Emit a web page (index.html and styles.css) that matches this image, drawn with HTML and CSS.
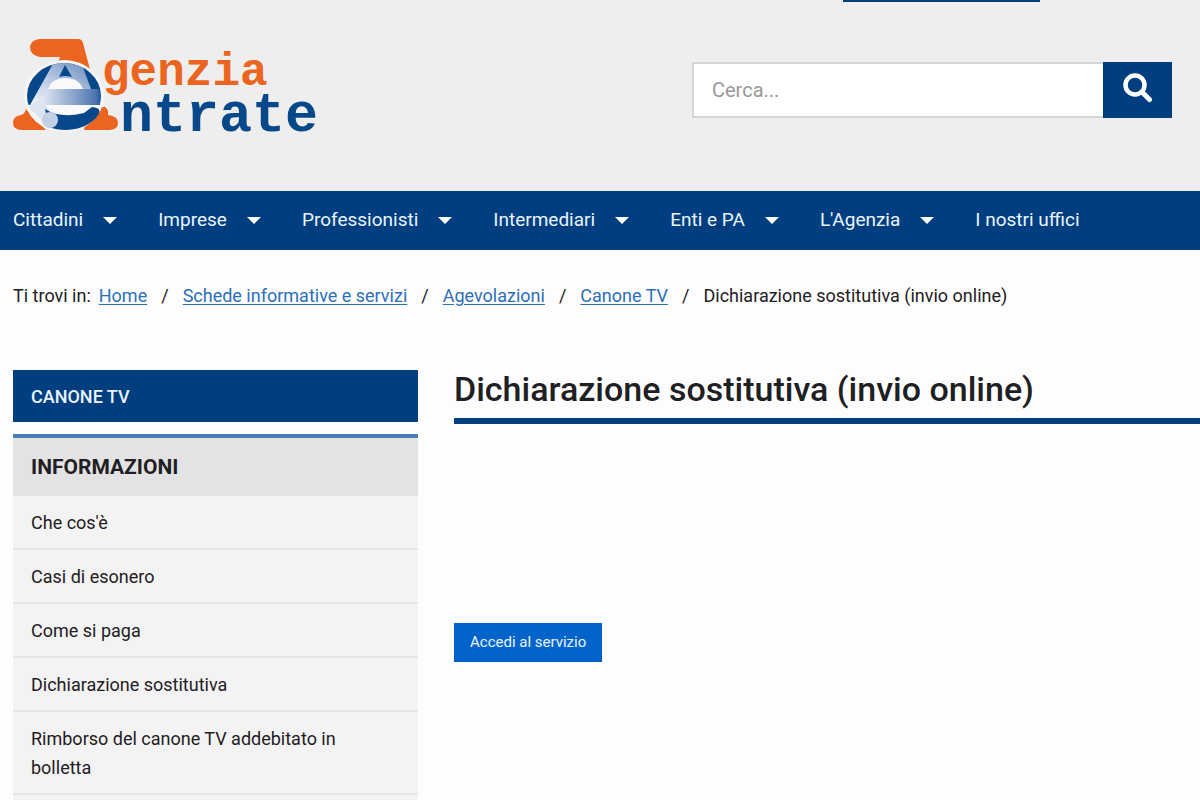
FILE: index.html
```html
<!DOCTYPE html>
<html lang="it">
<head>
<meta charset="utf-8">
<meta name="viewport" content="width=device-width, initial-scale=1">
<title>Dichiarazione sostitutiva (invio online)</title>
<link rel="stylesheet" href="styles.css">
</head>
<body>
<header class="header">
  <div class="top-tab"></div>
  <div class="brand-row">
    <a class="logo" href="#" aria-label="Agenzia Entrate">
      <svg width="320" height="120" viewBox="8 32 320 120">
        <defs>
          <linearGradient id="band" x1="0" x2="1" y1="0" y2="0">
            <stop offset="0" stop-color="#dbe3f1"/>
            <stop offset=".9" stop-color="#5078b2"/>
            <stop offset="1" stop-color="#2a5b9b"/>
          </linearGradient>
          <linearGradient id="leg" x1="0" x2="1" y1="1" y2="0">
            <stop offset="0" stop-color="#f4f6fa"/>
            <stop offset=".5" stop-color="#b3c3e0"/>
            <stop offset="1" stop-color="#5f83b9"/>
          </linearGradient>
          <clipPath id="disc"><ellipse cx="64" cy="95" rx="37" ry="33"/></clipPath>
        </defs>
        <path fill="#eb6420" d="M39 38H78Q82 38 83 42L92 76H56L57 64L60 56H40Q30 54 30 46Q31 39 39 38Z"/>
        <path fill="#eb6420" d="M26 108L46 129H22Q13 129 13 122Q13 115 21 114Q25 113 26 108ZM89 105H103Q109 107 108 114Q118 115 118 122Q118 129 109 129H84Z"/>
        <ellipse cx="64" cy="95" rx="40" ry="36" fill="#f4f5f6"/>
        <g clip-path="url(#disc)">
          <rect x="27" y="62" width="74" height="42" fill="#07488a"/>
          <path fill="url(#leg)" d="M54 61H81L97 104H30Z"/>
          <path fill="#dde5f1" d="M36 100H50Q45 108 55 118L50 127L28 106Z"/>
        </g>
        <path fill="#07488a" d="M65 64L72 76Q65 74 59 76Z"/>
        <path fill="#f9fafb" d="M48 88Q52 77 65 77Q79 77 83 88Z"/>
        <path fill="url(#band)" d="M45 88H99Q101 96 100 104H44Z"/>
        <path fill="#f9fafb" d="M45 104H104V106L92 107Q80 114 64 113Q52 112 45 104Z"/>
        <path fill="#07488a" d="M45 108Q60 118 84 112L92 106Q102 107 99 113Q89 128 66 129Q56 129 49 126Z"/>
        <ellipse cx="50" cy="119" rx="8" ry="8" fill="#c3cfe5"/>
        <text class="logo-agenzia" x="102" y="84">genzia</text>
        <text class="logo-entrate" x="120" y="130">ntrate</text>
      </svg>
    </a>
    <form class="search" role="search">
      <input class="search-input" type="search" placeholder="Cerca..." aria-label="Cerca">
      <button class="search-button" type="submit" aria-label="Avvia ricerca">
        <svg width="30" height="30" viewBox="0 0 30 30" fill="none" stroke="#fff">
          <circle cx="12" cy="12" r="9.5" stroke-width="4.5"/>
          <path d="M19 19L26.5 26.5" stroke-width="5" stroke-linecap="round"/>
        </svg>
      </button>
    </form>
  </div>
</header>
<nav class="nav" aria-label="Principale">
  <a class="nav-link has-menu" href="#">Cittadini</a>
  <a class="nav-link has-menu" href="#">Imprese</a>
  <a class="nav-link has-menu" href="#">Professionisti</a>
  <a class="nav-link has-menu" href="#">Intermediari</a>
  <a class="nav-link has-menu" href="#">Enti e PA</a>
  <a class="nav-link has-menu" href="#">L'Agenzia</a>
  <a class="nav-link" href="#">I nostri uffici</a>
</nav>
<nav class="breadcrumb" aria-label="Percorso">
  <span class="crumb-label">Ti trovi in:</span>
  <ol class="crumbs">
    <li class="crumb"><a href="#">Home</a></li>
    <li class="crumb"><a href="#">Schede informative e servizi</a></li>
    <li class="crumb"><a href="#">Agevolazioni</a></li>
    <li class="crumb"><a href="#">Canone TV</a></li>
    <li class="crumb" aria-current="page">Dichiarazione sostitutiva (invio online)</li>
  </ol>
</nav>
<div class="layout">
  <aside class="sidebar">
    <a class="side-title" href="#">CANONE TV</a>
    <h2 class="side-heading">INFORMAZIONI</h2>
    <ul class="side-list">
      <li class="side-item"><a href="#">Che cos'è</a></li>
      <li class="side-item"><a href="#">Casi di esonero</a></li>
      <li class="side-item"><a href="#">Come si paga</a></li>
      <li class="side-item"><a href="#">Dichiarazione sostitutiva</a></li>
      <li class="side-item"><a href="#">Rimborso del canone TV addebitato in bolletta</a></li>
    </ul>
  </aside>
  <main class="main">
    <h1 class="title">Dichiarazione sostitutiva (invio online)</h1>
    <button class="action" type="button">Accedi al servizio</button>
  </main>
</div>
</body>
</html>
```

FILE: styles.css
```css
* { box-sizing: border-box; }

body {
  margin: 0;
  background: #fdfdfd;
  color: #1f2023;
  font-family: Roboto, "Liberation Sans", sans-serif;
  font-size: 18px;
  line-height: 29px;
}

.header {
  padding-bottom: 38px;
  background: #eee;
}

.top-tab {
  width: 197px;
  height: 2px;
  margin: 0 160px 0 auto;
  background: #003e80;
}

.brand-row {
  display: flex;
  align-items: flex-start;
  justify-content: space-between;
  padding: 31px 28px 0 8px;
}

.logo svg { display: block; }

.logo-agenzia,
.logo-entrate {
  font-family: "Liberation Mono", monospace;
  font-weight: 700;
}

.logo-agenzia { font-size: 46px; fill: #eb6420; }
.logo-entrate { font-size: 55px; fill: #07488a; }

.search {
  display: flex;
  width: 480px;
  height: 56px;
  margin-top: 29px;
}

.search-input {
  flex: 1;
  min-width: 0;
  padding: 0 18px;
  border: 2px solid #d6d6d6;
  border-right: 0;
  border-radius: 0;
  background: #fff;
  font: inherit;
  font-size: 20px;
}

.search-input::placeholder { color: #999; }

.search-button {
  display: grid;
  place-items: center;
  width: 69px;
  padding: 0 0 4px;
  border: 0;
  background: #003e80;
}

.nav {
  display: flex;
  gap: 41px;
  padding: 14px 13px 15px;
  background: #003e80;
}

.nav-link {
  display: flex;
  align-items: center;
  gap: 20px;
  color: #eaf4ff;
  font-size: 19px;
  line-height: 30px;
  text-decoration: none;
  white-space: nowrap;
}

.has-menu::after {
  content: "";
  border: 7px solid transparent;
  border-top-color: #fff;
  border-bottom: 0;
}

.breadcrumb {
  display: flex;
  gap: 8px;
  padding: 31px 13px 60px;
}

.crumbs {
  display: flex;
  margin: 0;
  padding: 0;
  list-style: none;
}

.crumb + .crumb::before {
  content: "/";
  padding: 0 14px;
}

.crumb a {
  color: #2d70b8;
  text-underline-offset: 2px;
}

.layout {
  display: grid;
  grid-template-columns: 405px 1fr;
  gap: 36px;
  padding-left: 13px;
}

.side-title {
  display: block;
  margin-bottom: 12px;
  padding: 12px 18px 11px;
  background: #003e80;
  color: #eaf4ff;
  font-weight: 500;
  text-decoration: none;
}

.side-heading {
  margin: 0;
  padding: 14px 18px;
  border-top: 4px solid #4a7fb5;
  background: #e3e3e3;
  font-size: 21px;
  line-height: 30px;
}

.side-list {
  margin: 0;
  padding: 0 0 5px;
  background: #f3f3f3;
  list-style: none;
}

.side-item {
  padding: 12px 60px 11px 18px;
  border-bottom: 2px solid #e6e6e6;
}

.side-item a {
  color: inherit;
  text-decoration: none;
}

.title {
  margin: 0 0 199px;
  padding-bottom: 10px;
  border-bottom: 6px solid #003e80;
  font-size: 34px;
  font-weight: 500;
  line-height: 38px;
}

.action {
  padding: 5px 16px;
  border: 0;
  background: #0264cb;
  color: #eaf4ff;
  font: inherit;
  font-size: 15px;
  line-height: 29px;
}
```
